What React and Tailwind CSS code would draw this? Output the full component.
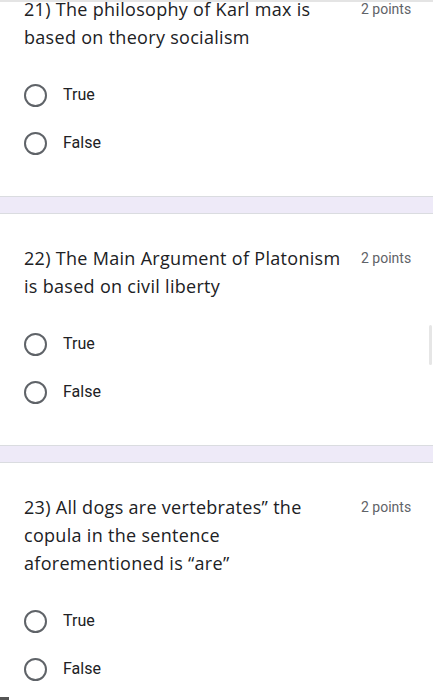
import React from "react";

const questions = [
  { id: 21, title: "21) The philosophy of Karl max is based on theory socialism" },
  { id: 22, title: "22) The Main Argument of Platonism is based on civil liberty" },
  { id: 23, title: "23) All dogs are vertebrates\u201D the copula in the sentence aforementioned is \u201Care\u201D" },
];

function Radio({ label }) {
  return (
    <div className="flex items-center h-12">
      <div className="w-[23px] h-[23px] rounded-full border-2 border-[#5f6368] shrink-0" />
      <span className="ml-[16px] text-[16px] text-[#202124] font-['Roboto',sans-serif]">{label}</span>
    </div>
  );
}

function QuestionCard({ q, first }) {
  return (
    <div className={`bg-white pl-6 pr-[22px] pt-[30px] pb-[29px] ${first ? "-mt-[37px]" : "border-t border-[#dadce0]"} border-b border-[#dadce0]`}>
      <div className="flex items-start justify-between">
        <div className="w-[322px] text-[18px] leading-[28px] text-[#202124] font-['Open_Sans',sans-serif] tracking-[0.3px]">
          {q.title}
        </div>
        <div className="w-[50px] text-right text-[14px] leading-[28px] text-[#5f6368] font-['Roboto',sans-serif] whitespace-nowrap">
          2 points
        </div>
      </div>
      <div className="mt-5">
        <Radio label="True" />
        <Radio label="False" />
      </div>
    </div>
  );
}

export default function App() {
  return (
    <div className="relative w-[433px] h-[700px] overflow-hidden bg-[#eeeaf8]">
      <div className="relative z-10 h-[2px] bg-[#e4e4e4]" />
      {questions.map((q, i) => (
        <div key={q.id} className={i > 0 ? "mt-[16px]" : ""}>
          <QuestionCard q={q} first={i === 0} />
        </div>
      ))}
      <div className="absolute right-[1px] top-[325px] w-[3px] h-[40px] rounded bg-[#e6e6e6]" />
      <div className="absolute left-0 bottom-0 w-[9px] h-[3px] bg-[#555]" />
    </div>
  );
}
